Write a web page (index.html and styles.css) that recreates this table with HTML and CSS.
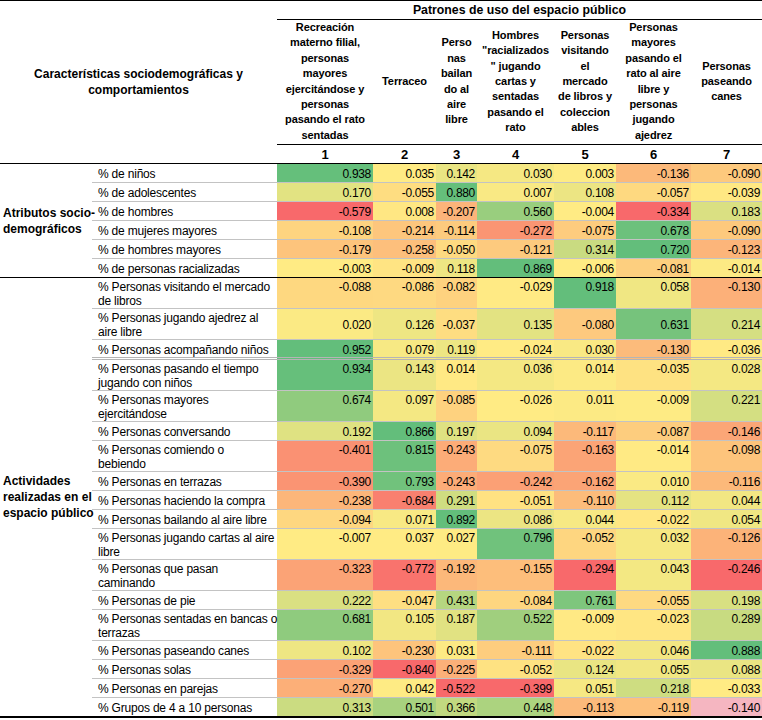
FILE: index.html
```html
<!DOCTYPE html>
<html lang="es">
<head>
<meta charset="utf-8">
<title>Patrones de uso del espacio público</title>
<link rel="stylesheet" href="styles.css">
</head>
<body>
<table class="tbl">
  <colgroup>
    <col class="c-grp"><col class="c-lab"><col class="c1"><col class="c2"><col class="c3"><col class="c4"><col class="c5"><col class="c6"><col class="c7">
  </colgroup>
  <thead>
    <tr class="h-top">
      <th rowspan="3" colspan="2" class="h-main">Características sociodemográficas y<br>comportamientos</th>
      <th colspan="7" class="h-pat">Patrones de uso del espacio público</th>
    </tr>
    <tr class="h-cols">
      <th>Recreación<br>materno filial,<br>personas<br>mayores<br>ejercitándose y<br>personas<br>pasando el rato<br>sentadas</th>
      <th>Terraceo</th>
      <th>Perso<br>nas<br>bailan<br>do al<br>aire<br>libre</th>
      <th>Hombres<br>"racializados<br>" jugando<br>cartas y<br>sentadas<br>pasando el<br>rato</th>
      <th>Personas<br>visitando<br>el<br>mercado<br>de libros y<br>coleccion<br>ables</th>
      <th>Personas<br>mayores<br>pasando el<br>rato al aire<br>libre y<br>personas<br>jugando<br>ajedrez</th>
      <th>Personas<br>paseando<br>canes</th>
    </tr>
    <tr class="h-num">
      <th>1</th><th>2</th><th>3</th><th>4</th><th>5</th><th>6</th><th>7</th>
    </tr>
  </thead>
  <tbody class="grp-body">
    <tr><th rowspan="6" class="grp">Atributos socio-<br>demográficos</th><td class="lab">% de niños</td><td class="v">0.938</td><td class="v">0.035</td><td class="v">0.142</td><td class="v">0.030</td><td class="v">0.003</td><td class="v">-0.136</td><td class="v">-0.090</td></tr>
    <tr><td class="lab">% de adolescentes</td><td class="v">0.170</td><td class="v">-0.055</td><td class="v">0.880</td><td class="v">0.007</td><td class="v">0.108</td><td class="v">-0.057</td><td class="v">-0.039</td></tr>
    <tr><td class="lab">% de hombres</td><td class="v">-0.579</td><td class="v">0.008</td><td class="v">-0.207</td><td class="v">0.560</td><td class="v">-0.004</td><td class="v">-0.334</td><td class="v">0.183</td></tr>
    <tr><td class="lab">% de mujeres mayores</td><td class="v">-0.108</td><td class="v">-0.214</td><td class="v">-0.114</td><td class="v">-0.272</td><td class="v">-0.075</td><td class="v">0.678</td><td class="v">-0.090</td></tr>
    <tr><td class="lab">% de hombres mayores</td><td class="v">-0.179</td><td class="v">-0.258</td><td class="v">-0.050</td><td class="v">-0.121</td><td class="v">0.314</td><td class="v">0.720</td><td class="v">-0.123</td></tr>
    <tr class="last"><td class="lab">% de personas racializadas</td><td class="v">-0.003</td><td class="v">-0.009</td><td class="v">0.118</td><td class="v">0.869</td><td class="v">-0.006</td><td class="v">-0.081</td><td class="v">-0.014</td></tr>
  </tbody>
  <tbody class="grp-body">
    <tr class="tall"><th rowspan="18" class="grp">Actividades<br>realizadas en el<br>espacio público</th><td class="lab">% Personas visitando el mercado<br>de libros</td><td class="v">-0.088</td><td class="v">-0.086</td><td class="v">-0.082</td><td class="v">-0.029</td><td class="v">0.918</td><td class="v">0.058</td><td class="v">-0.130</td></tr>
    <tr class="tall mid"><td class="lab">% Personas jugando ajedrez al<br>aire libre</td><td class="v">0.020</td><td class="v">0.126</td><td class="v">-0.037</td><td class="v">0.135</td><td class="v">-0.080</td><td class="v">0.631</td><td class="v">0.214</td></tr>
    <tr class="dbl"><td class="lab">% Personas acompañando niños</td><td class="v">0.952</td><td class="v">0.079</td><td class="v">0.119</td><td class="v">-0.024</td><td class="v">0.030</td><td class="v">-0.130</td><td class="v">-0.036</td></tr>
    <tr class="tall"><td class="lab">% Personas pasando el tiempo<br>jugando con niños</td><td class="v">0.934</td><td class="v">0.143</td><td class="v">0.014</td><td class="v">0.036</td><td class="v">0.014</td><td class="v">-0.035</td><td class="v">0.028</td></tr>
    <tr class="tall"><td class="lab">% Personas mayores<br>ejercitándose</td><td class="v">0.674</td><td class="v">0.097</td><td class="v">-0.085</td><td class="v">-0.026</td><td class="v">0.011</td><td class="v">-0.009</td><td class="v">0.221</td></tr>
    <tr><td class="lab">% Personas conversando</td><td class="v">0.192</td><td class="v">0.866</td><td class="v">0.197</td><td class="v">0.094</td><td class="v">-0.117</td><td class="v">-0.087</td><td class="v">-0.146</td></tr>
    <tr class="tall"><td class="lab">% Personas comiendo o<br>bebiendo</td><td class="v">-0.401</td><td class="v">0.815</td><td class="v">-0.243</td><td class="v">-0.075</td><td class="v">-0.163</td><td class="v">-0.014</td><td class="v">-0.098</td></tr>
    <tr><td class="lab">% Personas en terrazas</td><td class="v">-0.390</td><td class="v">0.793</td><td class="v">-0.243</td><td class="v">-0.242</td><td class="v">-0.162</td><td class="v">0.010</td><td class="v">-0.116</td></tr>
    <tr><td class="lab">% Personas haciendo la compra</td><td class="v">-0.238</td><td class="v">-0.684</td><td class="v">0.291</td><td class="v">-0.051</td><td class="v">-0.110</td><td class="v">0.112</td><td class="v">0.044</td></tr>
    <tr><td class="lab">% Personas bailando al aire libre</td><td class="v">-0.094</td><td class="v">0.071</td><td class="v">0.892</td><td class="v">0.086</td><td class="v">0.044</td><td class="v">-0.022</td><td class="v">0.054</td></tr>
    <tr class="tall"><td class="lab">% Personas jugando cartas al aire<br>libre</td><td class="v">-0.007</td><td class="v">0.037</td><td class="v">0.027</td><td class="v">0.796</td><td class="v">-0.052</td><td class="v">0.032</td><td class="v">-0.126</td></tr>
    <tr class="tall"><td class="lab">% Personas que pasan<br>caminando</td><td class="v">-0.323</td><td class="v">-0.772</td><td class="v">-0.192</td><td class="v">-0.155</td><td class="v">-0.294</td><td class="v">0.043</td><td class="v">-0.246</td></tr>
    <tr><td class="lab">% Personas de pie</td><td class="v">0.222</td><td class="v">-0.047</td><td class="v">0.431</td><td class="v">-0.084</td><td class="v">0.761</td><td class="v">-0.055</td><td class="v">0.198</td></tr>
    <tr class="tall"><td class="lab">% Personas sentadas en bancas o<br>terrazas</td><td class="v">0.681</td><td class="v">0.105</td><td class="v">0.187</td><td class="v">0.522</td><td class="v">-0.009</td><td class="v">-0.023</td><td class="v">0.289</td></tr>
    <tr><td class="lab">% Personas paseando canes</td><td class="v">0.102</td><td class="v">-0.230</td><td class="v">0.031</td><td class="v">-0.111</td><td class="v">-0.022</td><td class="v">0.046</td><td class="v">0.888</td></tr>
    <tr><td class="lab">% Personas solas</td><td class="v">-0.329</td><td class="v">-0.840</td><td class="v">-0.225</td><td class="v">-0.052</td><td class="v">0.124</td><td class="v">0.055</td><td class="v">0.088</td></tr>
    <tr><td class="lab">% Personas en parejas</td><td class="v">-0.270</td><td class="v">0.042</td><td class="v">-0.522</td><td class="v">-0.399</td><td class="v">0.051</td><td class="v">0.218</td><td class="v">-0.033</td></tr>
    <tr class="last end"><td class="lab">% Grupos de 4 a 10 personas</td><td class="v">0.313</td><td class="v">0.501</td><td class="v">0.366</td><td class="v">0.448</td><td class="v">-0.113</td><td class="v">-0.119</td><td class="v pink">-0.140</td></tr>
  </tbody>
</table>
<script src="script.js"></script>
</body>
</html>
```

FILE: styles.css
```css
html, body {
  margin: 0;
  padding: 0;
  background: #ffffff;
}

body {
  font-family: "Liberation Sans", Arial, sans-serif;
  color: #000;
}

.tbl {
  width: 762px;
  border-collapse: collapse;
  table-layout: fixed;
  font-size: 12px;
}

.c-grp { width: 92px; }
.c-lab { width: 185px; }
.c1 { width: 96px; }
.c2 { width: 63px; }
.c3 { width: 41px; }
.c4 { width: 77px; }
.c5 { width: 62px; }
.c6 { width: 75px; }
.c7 { width: 71px; }

.tbl th,
.tbl td {
  padding: 0;
  white-space: nowrap;
}

/* header */
.h-top th {
  border-top: 1px solid #000;
}

.h-top {
  height: 19px;
}

.h-main {
  font-size: 12px;
  font-weight: bold;
  line-height: 16px;
  text-align: center;
  vertical-align: middle;
  border-bottom: 1px solid #000;
}

.h-pat {
  font-size: 12.3px;
  font-weight: bold;
  text-align: center;
  vertical-align: middle;
  line-height: 17px;
  border-bottom: 1px solid #000;
}

.h-cols th {
  font-size: 11px;
  font-weight: bold;
  line-height: 15.4px;
  text-align: center;
  vertical-align: middle;
  padding: 0 0 1px;
  height: 122px;
  border-bottom: 1px solid #000;
  letter-spacing: -0.1px;
}

.h-num th {
  font-size: 13px;
  font-weight: bold;
  text-align: center;
  vertical-align: middle;
  line-height: 17px;
  height: 18px;
  border-bottom: 1px solid #000;
}

/* body */
.grp-body tr {
  height: 19px;
}

.grp {
  font-size: 12px;
  font-weight: bold;
  text-align: left;
  vertical-align: middle;
  line-height: 16px;
  padding-left: 3px !important;
  border-bottom: 1px solid #000;
}

.lab,
.v {
  line-height: 14px;
  padding-top: 2px !important;
  border-bottom: 1px solid #c3c3c3;
  vertical-align: middle;
  letter-spacing: -0.2px;
}

.lab {
  padding-left: 6px !important;
  text-align: left;
}

.v {
  text-align: right;
  padding-right: 2px !important;
  letter-spacing: -0.3px;
}

.tall .v {
  vertical-align: top;
}

.tall.mid .v {
  vertical-align: middle;
}

.dbl td {
  border-bottom: 3px double #b5b5b5;
}

.last td {
  border-bottom: 1px solid #000;
}

.end td,
.end th {
  border-bottom: 2px solid #000;
}

.grp-body:last-child .grp {
  border-bottom: 2px solid #000;
}

.pink {
  background: #f5b6c1;
}
```

FILE: script.js
```js
(function () {
  var RED = [248, 105, 107];
  var YEL = [255, 235, 132];
  var GRN = [99, 190, 123];

  function mix(a, b, t) {
    t = Math.max(0, Math.min(1, t));
    return 'rgb(' + a.map(function (x, i) {
      return Math.round(x + (b[i] - x) * t);
    }).join(',') + ')';
  }

  function percentile(sorted, p) {
    var r = p * (sorted.length - 1);
    var lo = Math.floor(r), hi = Math.ceil(r);
    return sorted[lo] + (sorted[hi] - sorted[lo]) * (r - lo);
  }

  var rows = Array.prototype.slice.call(document.querySelectorAll('.tbl tbody tr'));
  for (var c = 0; c < 7; c++) {
    var cells = rows.map(function (r) { return r.querySelectorAll('td.v')[c]; });
    var vals = cells.map(function (td) { return parseFloat(td.textContent); });
    var sorted = vals.slice().sort(function (a, b) { return a - b; });
    var min = sorted[0], max = sorted[sorted.length - 1];
    var mid = percentile(sorted, 0.5);
    cells.forEach(function (td, i) {
      if (td.classList.contains('pink')) return;
      var v = vals[i];
      var col = v <= mid ? mix(RED, YEL, (v - min) / (mid - min)) : mix(YEL, GRN, (v - mid) / (max - mid));
      td.style.backgroundColor = col;
    });
  }
})();
```
